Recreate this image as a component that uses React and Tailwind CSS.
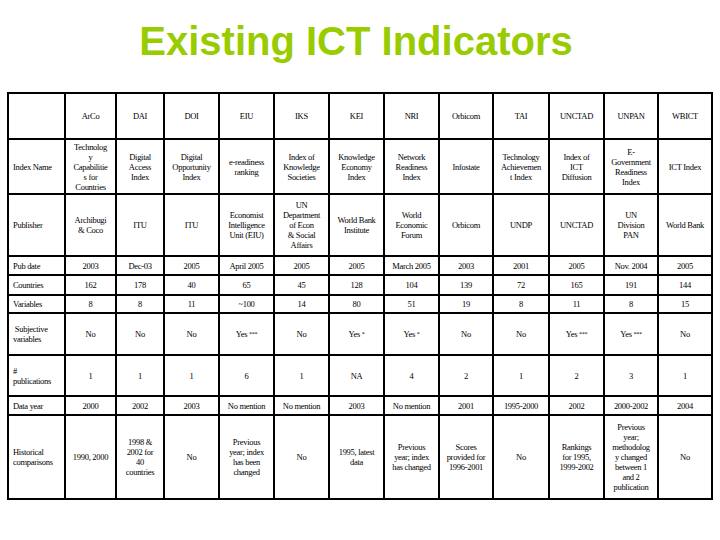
import React from "react";

const header = ["", "ArCo", "DAI", "DOI", "EIU", "IKS", "KEI", "NRI", "Orbicom", "TAI", "UNCTAD", "UNPAN", "WBICT"];

const rows = [
  ["Index Name", "Technolog\ny\nCapabilitie\ns for\nCountries", "Digital\nAccess\nIndex", "Digital\nOpportunity\nIndex", "e-readiness\nranking", "Index of\nKnowledge\nSocieties", "Knowledge\nEconomy\nIndex", "Network\nReadiness\nIndex", "Infostate", "Technology\nAchievemen\nt Index", "Index of\nICT\nDiffusion", "E-\nGovernment\nReadiness\nIndex", "ICT Index"],
  ["Publisher", "Archibugi\n& Coco", "ITU", "ITU", "Economist\nIntelligence\nUnit (EIU)", "UN\nDepartment\nof Econ\n& Social\nAffairs", "World Bank\nInstitute", "World\nEconomic\nForum", "Orbicom", "UNDP", "UNCTAD", "UN\nDivision\nPAN", "World Bank"],
  ["Pub date", "2003", "Dec-03", "2005", "April 2005", "2005", "2005", "March 2005", "2003", "2001", "2005", "Nov. 2004", "2005"],
  ["Countries", "162", "178", "40", "65", "45", "128", "104", "139", "72", "165", "191", "144"],
  ["Variables", "8", "8", "11", "~100", "14", "80", "51", "19", "8", "11", "8", "15"],
  ["\u00a0Subjective\nvariables", "No", "No", "No", "Yes***", "No", "Yes*", "Yes*", "No", "No", "Yes***", "Yes***", "No"],
  ["#\npublications", "1", "1", "1", "6", "1", "NA", "4", "2", "1", "2", "3", "1"],
  ["Data year", "2000", "2002", "2003", "No mention", "No mention", "2003", "No mention", "2001", "1995-2000", "2002", "2000-2002", "2004"],
  ["Historical\ncomparisons", "1990, 2000", "1998 &\n2002 for\n40\ncountries", "No", "Previous\nyear; index\nhas been\nchanged", "No", "1995, latest\ndata", "Previous\nyear; index\nhas changed", "Scores\nprovided for\n1996-2001", "No", "Rankings\nfor 1995,\n1999-2002", "Previous\nyear;\nmethodolog\ny changed\nbetween 1\nand 2\npublication", "No"],
];

function CellText({ text }) {
  const m = text.match(/^(Yes)(\*+)$/);
  if (m) {
    return (
      <span>
        Yes <span className="text-[6px] align-top">{m[2]}</span>
      </span>
    );
  }
  return <span>{text}</span>;
}

export default function App() {
  const all = [header, ...rows];
  return (
    <div className="w-[720px] h-[540px] bg-white overflow-hidden">
      <div className="pt-[21px] pr-[8px] h-[61px] text-center font-['Liberation_Sans',Arial,sans-serif] font-bold text-[40px] leading-[40px] text-[#99cc00]">
        Existing ICT Indicators
      </div>
      <div className="mt-[31px] ml-[7px] w-[706px] grid grid-cols-[55px_49px_46px_53px_53px_53px_53px_53px_52px_54px_53px_52px_52px] grid-rows-[44px_53px_60px_17px_18px_16px_40px_39px_17px_82px] gap-[2px] p-[2px] bg-black font-['Liberation_Serif','Times_New_Roman',serif] text-[8.5px] leading-[10px] tracking-[-0.3px] text-black">
        {all.map((row, ri) =>
          row.map((cell, ci) => (
            <div
              key={ri + "-" + ci}
              className={
                ci === 0
                  ? "bg-white flex items-center justify-start pl-[4px] text-left whitespace-pre-line"
                  : "bg-white flex items-center justify-center text-center whitespace-pre-line"
              }
            >
              <CellText text={cell} />
            </div>
          ))
        )}
      </div>
    </div>
  );
}
